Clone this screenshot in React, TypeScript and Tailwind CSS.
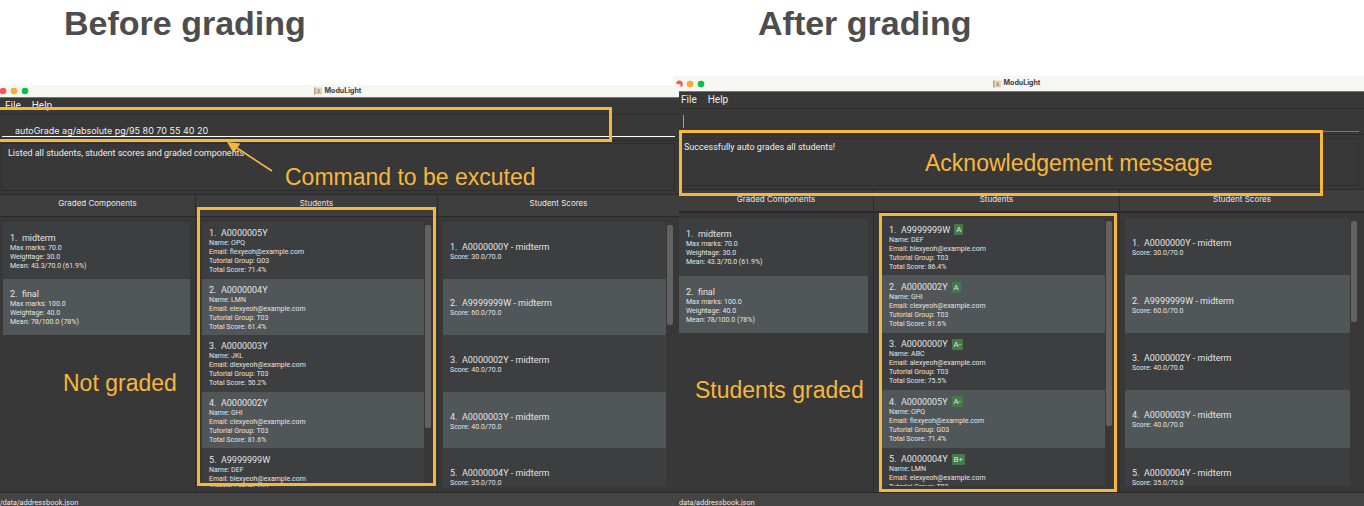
import React from "react";

type Entry = { title: string; lines: string[]; grade?: string };

const components: Entry[] = [
  { title: "1.  midterm", lines: ["Max marks: 70.0", "Weightage: 30.0", "Mean: 43.3/70.0 (61.9%)"] },
  { title: "2.  final", lines: ["Max marks: 100.0", "Weightage: 40.0", "Mean: 78/100.0 (78%)"] },
];

const student = (title: string, name: string, mail: string, group: string, score: string, grade?: string): Entry => ({
  title,
  grade,
  lines: [`Name: ${name}`, `Email: ${mail}@example.com`, `Tutorial Group: ${group}`, `Total Score: ${score}`],
});

const ungraded: Entry[] = [
  student("1.  A0000005Y", "OPQ", "flexyeoh", "G03", "71.4%"),
  student("2.  A0000004Y", "LMN", "elexyeoh", "T03", "61.4%"),
  student("3.  A0000003Y", "JKL", "dlexyeoh", "T03", "50.2%"),
  student("4.  A0000002Y", "GHI", "clexyeoh", "T03", "81.6%"),
  student("5.  A9999999W", "DEF", "blexyeoh", "T03", "86.4%"),
];

const graded: Entry[] = [
  student("1.  A9999999W", "DEF", "blexyeoh", "T03", "86.4%", "A"),
  student("2.  A0000002Y", "GHI", "clexyeoh", "T03", "81.6%", "A"),
  student("3.  A0000000Y", "ABC", "alexyeoh", "T03", "75.5%", "A-"),
  student("4.  A0000005Y", "OPQ", "flexyeoh", "G03", "71.4%", "A-"),
  student("5.  A0000004Y", "LMN", "elexyeoh", "T03", "61.4%", "B+"),
];

const scores: Entry[] = [
  { title: "1.  A0000000Y - midterm", lines: ["Score: 30.0/70.0"] },
  { title: "2.  A9999999W - midterm", lines: ["Score: 60.0/70.0"] },
  { title: "3.  A0000002Y - midterm", lines: ["Score: 40.0/70.0"] },
  { title: "4.  A0000003Y - midterm", lines: ["Score: 40.0/70.0"] },
  { title: "5.  A0000004Y - midterm", lines: ["Score: 35.0/70.0"] },
];

function List({ items, height }: { items: Entry[]; height: string }) {
  return (
    <div className="h-full min-w-0 flex-1 overflow-hidden">
      <ul className={`grid auto-rows-fr ${height}`}>
        {items.map((it) => (
          <li
            key={it.title}
            className="flex min-h-0 flex-col justify-center bg-[#3c3e3f] pt-[2px] pl-[7px] font-['Roboto',sans-serif] text-[7px] leading-[9px] whitespace-pre text-[#e4e4e4] even:bg-[#515658]"
          >
            <div className="flex h-3 items-center gap-1 text-[9px] leading-3">
              {it.title}
              {it.grade && (
                <span className="rounded-[1px] bg-[#44794a] px-[2px] text-[8px] leading-[11px]">{it.grade}</span>
              )}
            </div>
            {it.lines.map((l) => (
              <div key={l}>{l}</div>
            ))}
          </li>
        ))}
      </ul>
    </div>
  );
}

function TitleBar({ className, clipped }: { className: string; clipped?: boolean }) {
  return (
    <div
      className={`relative flex shrink-0 items-center justify-center gap-[3px] bg-[#f6f7f1] pr-1 text-[7px] font-bold text-[#3b3b3b] ${className}`}
    >
      <svg className="absolute left-0 h-2 w-9" viewBox="0 0 36 8" aria-hidden="true">
        {clipped ? <path d="M3 3.5A3.4 3.4 0 1 1 7.5 7.2V4.5Z" fill="#fc5753" /> : <circle cx="3" cy="4" r="3.3" fill="#fc5753" />}
        <circle cx={clipped ? 17 : 14} cy="4" r="3.3" fill="#fdab33" />
        <circle cx={clipped ? 28 : 25} cy="4" r="3.3" fill="#05c146" />
      </svg>
      <svg className="h-2 w-2" viewBox="0 0 8 8" aria-hidden="true">
        <path d="M0 .5h8v7H0z" fill="#e6d3b8" />
        <path d="M0 .5h1.5v7H0z" fill="#aaa79f" />
        <circle cx="4.8" cy="3.2" r=".9" fill="#a08467" />
        <path d="M3 5.8c.3-1.6 3.3-1.6 3.6 0z" fill="#a08467" />
      </svg>
      ModuLight
    </div>
  );
}

function Menu({ className }: { className: string }) {
  return (
    <nav
      className={`flex h-[18px] shrink-0 items-start gap-[11px] border-t border-b border-t-[#77776f] border-b-[#2c2c2c] font-['Roboto',sans-serif] text-[10px] leading-4 ${className}`}
    >
      <button type="button">File</button>
      <button type="button">Help</button>
    </nav>
  );
}

const heading = "flex items-center justify-center text-[8px] text-[#e8e8e8]";
const mark = "pointer-events-none absolute border-[3px] border-[#f6b73c]";
const note = "pointer-events-none absolute font-['Liberation_Sans',sans-serif] text-[23px] leading-7 whitespace-nowrap text-[#f6b73c]";
const thumb = "mt-[3px] w-[6px] shrink-0 rounded-[2px] bg-[#626262]";

function Before() {
  return (
    <section className="relative flex min-w-0 flex-[679] flex-col overflow-hidden">
      <h1 className="h-[85px] shrink-0 pt-1 pl-16 font-['Liberation_Sans',sans-serif] text-[34px] leading-[38px] font-bold text-[#4d4d4d]">
        Before grading
      </h1>
      <TitleBar className="h-3" />
      <Menu className="pl-[5px]" />
      <div className="h-[26px] shrink-0 border-b border-[#2c2c2c] pt-[10px] pr-1 pl-[2px]">
        <input
          aria-label="Command"
          defaultValue="autoGrade ag/absolute pg/95 80 70 55 40 20"
          className="block h-3 w-full border-b border-white bg-transparent pl-[13px] text-[9px] leading-[11px] outline-none"
        />
      </div>
      <div className="h-[54px] shrink-0 border-b border-[#2b2b2b] pt-[2px] pr-1 pl-px">
        <output className="block h-12 border border-[#2d2d2d] pt-[3px] pl-[6px] font-['Roboto',sans-serif] text-[9px] leading-3">
          Listed all students, student scores and graded components
        </output>
      </div>
      <div className="grid h-[22px] shrink-0 grid-cols-[196fr_242fr_241fr] border-b border-[#292929] bg-[#3e3e3e]">
        <h2 className={`${heading} border-r border-[#2b2b2b] pb-[5px]`}>Graded Components</h2>
        <h2 className={`${heading} border-r border-[#2b2b2b] pb-[5px]`}>Students</h2>
        <h2 className={`${heading} pb-[5px]`}>Student Scores</h2>
      </div>
      <div className="grid min-h-0 flex-1 grid-cols-[196fr_242fr_241fr]">
        <div className="flex min-h-0 border-r border-[#2d2d2d] pt-[5px] pr-[5px] pb-[5px] pl-[3px]">
          <List items={components} height="h-[113px]" />
        </div>
        <div className="flex min-h-0 gap-px border-r border-[#2d2d2d] pt-[5px] pr-[6px] pb-[5px] pl-[6px]">
          <List items={ungraded} height="h-[283px]" />
          <div className={`${thumb} h-[203px]`} />
        </div>
        <div className="flex min-h-0 gap-px pt-[5px] pr-[6px] pb-[5px] pl-[5px]">
          <List items={scores} height="h-[283px]" />
          <div className={`${thumb} h-[100px]`} />
        </div>
      </div>
      <footer className="h-[14px] shrink-0 overflow-hidden border-t border-[#2b2b2b] bg-[#444444] pt-1 text-[7px] leading-3">
        /data/addressbook.json
      </footer>
      <div className={`${mark} top-[107px] -left-1 h-[35px] w-[616px]`} />
      <div className={`${mark} top-[207px] left-[197px] h-[279px] w-[239px]`} />
      <svg className="pointer-events-none absolute top-[140px] left-[225px] h-[34px] w-[50px]" viewBox="0 0 50 34" aria-hidden="true">
        <path d="M47 31 12 8" stroke="#f6b73c" strokeWidth="1.6" />
        <path d="M2 2 15.500 3.500 8.500 13Z" fill="#f6b73c" />
      </svg>
      <p className={`${note} top-[163px] left-[285px]`}>Command to be excuted</p>
      <p className={`${note} top-[369px] left-[63px]`}>Not graded</p>
    </section>
  );
}

function After() {
  return (
    <section className="relative flex min-w-0 flex-[685] flex-col">
      <h1 className="h-[76px] shrink-0 pt-1 pl-[79px] font-['Liberation_Sans',sans-serif] text-[34px] leading-[38px] font-bold text-[#4d4d4d]">
        After grading
      </h1>
      <TitleBar className="-ml-[6px] h-[15px]" clipped />
      <Menu className="pl-[2px]" />
      <div className="h-[26px] shrink-0 border-b border-[#2c2c2c] pt-[6px] pr-[5px] pl-1">
        <input
          aria-label="Command"
          defaultValue=""
          className="block h-[17px] w-full border-b border-[#777777] bg-[linear-gradient(#a0a0a0,#a0a0a0)] bg-[length:1px_13px] bg-no-repeat outline-none"
        />
      </div>
      <div className="h-[55px] shrink-0 border-b border-[#2b2b2b] pt-[3px] pr-[5px]">
        <output className="block h-12 border border-[#303030] pt-[2px] pl-1 font-['Roboto',sans-serif] text-[9px] leading-3">
          Successfully auto grades all students!
        </output>
      </div>
      <div className="grid h-[23px] shrink-0 grid-cols-[195fr_246fr_244fr] border-b-2 border-[#292929] bg-[#3e3e3e]">
        <h2 className={`${heading} border-r border-[#2b2b2b] pb-1`}>Graded Components</h2>
        <h2 className={`${heading} border-r border-[#2b2b2b] pb-1`}>Students</h2>
        <h2 className={`${heading} pb-1`}>Student Scores</h2>
      </div>
      <div className="grid min-h-0 flex-1 grid-cols-[195fr_246fr_244fr]">
        <div className="flex min-h-0 border-r border-[#2d2d2d] pt-[5px] pr-[5px] pb-[6px]">
          <List items={components} height="h-[115px]" />
        </div>
        <div className="flex min-h-0 gap-px border-r border-[#2d2d2d] pt-[5px] pr-[7px] pb-[6px] pl-2">
          <List items={graded} height="h-[287px]" />
          <div className={`${thumb} h-[205px]`} />
        </div>
        <div className="flex min-h-0 gap-px pt-[5px] pr-[7px] pb-[6px] pl-[5px]">
          <List items={scores} height="h-[287px]" />
          <div className={`${thumb} h-[101px]`} />
        </div>
      </div>
      <footer className="h-[14px] shrink-0 overflow-hidden border-t border-[#2b2b2b] bg-[#444444] pt-1 text-[7px] leading-3">
        data/addressbook.json
      </footer>
      <div className={`${mark} top-[130px] left-0 h-[66px] w-[644px]`} />
      <div className={`${mark} top-[213px] left-[200px] h-[279px] w-[238px]`} />
      <p className={`${note} top-[149px] left-[246px]`}>Acknowledgement message</p>
      <p className={`${note} top-[376px] left-4`}>Students graded</p>
    </section>
  );
}

export default function App() {
  return (
    <main className="flex h-screen min-h-[400px] overflow-hidden bg-[linear-gradient(#ffffff_90px,#383838_90px)] font-['Inter',sans-serif] text-[#eeeeee]">
      <Before />
      <After />
    </main>
  );
}
